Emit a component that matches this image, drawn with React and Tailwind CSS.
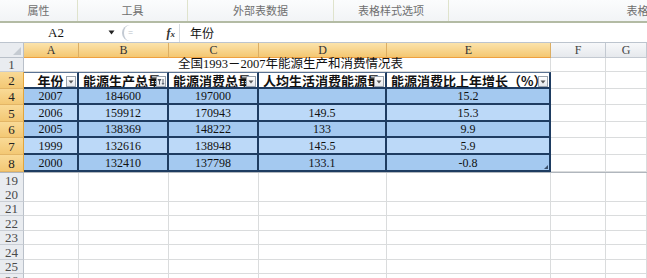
import React from 'react';

const serif = "font-['Liberation_Serif','Noto_Sans_CJK_SC',serif]";
const cjk = "font-['Noto_Sans_CJK_SC',sans-serif]";
const gridCols = 'grid grid-cols-[24px_55px_90px_90px_128px_164px_55px_41px]';

const groups = [
  { label: '属性', w: 'w-[78px]' },
  { label: '工具', w: 'w-[110px]' },
  { label: '外部表数据', w: 'w-[146px]' },
  { label: '表格样式选项', w: 'w-[115px]' },
  { label: '表格样式', w: 'w-[400px]' },
];

const data = [
  { n: 4, h: 'h-[16px]', band: 'bg-[#a4c9f0]', v: ['2007', '184600', '197000', '', '15.2'] },
  { n: 5, h: 'h-[17px]', band: 'bg-[#bcd9f8]', v: ['2006', '159912', '170943', '149.5', '15.3'] },
  { n: 6, h: 'h-[16px]', band: 'bg-[#a4c9f0]', v: ['2005', '138369', '148222', '133', '9.9'] },
  { n: 7, h: 'h-[17px]', band: 'bg-[#bcd9f8]', v: ['1999', '132616', '138948', '145.5', '5.9'] },
  { n: 8, h: 'h-[17px]', band: 'bg-[#a4c9f0]', v: ['2000', '132410', '137798', '133.1', '-0.8'] },
];

const headers = ['年份', '能源生产总量', '能源消费总量', '人均生活消费能源量', '能源消费比上年增长（%）'];

const FilterBtn = ({ active }) => (
  <span className="absolute right-[1px] top-[3px] w-[10px] h-[11px] border border-[#9aa3ad] bg-gradient-to-b from-[#ffffff] to-[#e4e7eb] flex items-center justify-center">
    {active ? (
      <svg width="8" height="8" viewBox="0 0 8 8">
        <path d="M0.5 1h4L3 3.5V7L2 6V3.5z" fill="#4a5563" />
        <path d="M6 1v5M5 5l1 1.5L7 5" stroke="#4a5563" strokeWidth="0.9" fill="none" />
      </svg>
    ) : (
      <svg width="6" height="4" viewBox="0 0 6 4">
        <path d="M0.5 0.5h5L3 3.5z" fill="#555" />
      </svg>
    )}
  </span>
);

const RowHead = ({ n, hl, h }) => (
  <div
    className={`${h} ${serif} text-[13px] leading-none flex items-center justify-center border-r border-b ${
      hl
        ? 'bg-gradient-to-b from-[#f9da96] to-[#f3c874] border-r-[#e2a53c] border-b-[#e3b565] text-[#222]'
        : 'bg-[#e9ecf0] border-r-[#b9c0c9] border-b-[#c9ced5] text-[#4a4a4a]'
    }`}
  >
    {n}
  </div>
);

const EmptyCells = ({ count }) =>
  Array.from({ length: count }).map((_, i) => (
    <div key={i} className="border-r border-b border-[#dadcdd] bg-white" />
  ));

export default function App() {
  const blank = [19, 20, 21, 22, 23, 24, 25, 26];
  const blankH = ['h-[15px]', 'h-[15px]', 'h-[14px]', 'h-[15px]', 'h-[14px]', 'h-[15px]', 'h-[14px]', 'h-[14px]'];

  return (
    <div className="w-[647px] h-[278px] overflow-hidden bg-white">
      {/* ribbon group labels */}
      <div className="h-[23px] flex bg-gradient-to-b from-[#fbfcfd] to-[#f2f4f6] border-b-2 border-[#b3bba4] overflow-hidden">
        {groups.map((g) => (
          <div
            key={g.label}
            className={`${g.w} shrink-0 h-full border-r border-[#dfe3cc] flex items-center justify-center ${cjk} text-[11px] text-[#6f6f6f]`}
          >
            {g.label}
          </div>
        ))}
      </div>

      {/* formula bar */}
      <div className="h-[20px] flex items-center bg-white border-b border-[#bcc4ce]">
        <div className={`w-[108px] shrink-0 text-center ${serif} text-[13px] text-[#111] pl-[4px]`}>A2</div>
        <svg width="7" height="5" viewBox="0 0 7 5" className="shrink-0">
          <path d="M0.5 0.5h6L3.5 4.5z" fill="#222" />
        </svg>
        <div className="ml-[7px] w-[57px] h-[16px] shrink-0 rounded-l-full border-l-2 border-[#c3cad3] flex items-center justify-between pl-[4px] pr-[4px]">
          <span className="text-[9px] text-[#b7bec7] leading-none">=</span>
          <span className="font-['Liberation_Serif',serif] italic text-[12px] font-bold text-[#333] leading-none">
            f<span className="text-[9px]">x</span>
          </span>
        </div>
        <div className="w-px h-[18px] bg-[#d6dbe1] shrink-0" />
        <div className={`pl-[10px] ${cjk} text-[12px] text-[#111]`}>年份</div>
      </div>

      {/* column headers */}
      <div className={`${gridCols} h-[15px]`}>
        <div className="relative bg-[#e9ecf0] border-r border-b border-[#b9c0c9]">
          <span className="absolute right-[2px] bottom-[2px] w-0 h-0 border-l-[8px] border-l-transparent border-b-[8px] border-b-[#c5cbd2]" />
        </div>
        {['A', 'B', 'C', 'D', 'E'].map((c) => (
          <div
            key={c}
            className={`bg-gradient-to-b from-[#fbe3ab] to-[#f4c770] border-r border-b border-r-[#dcae63] border-b-[#eea040] flex items-center justify-center ${serif} text-[12px] text-[#333] leading-none`}
          >
            {c}
          </div>
        ))}
        {['F', 'G'].map((c) => (
          <div
            key={c}
            className={`bg-gradient-to-b from-[#f7f8fa] to-[#e6e9ed] border-r border-b border-[#c3c9d1] flex items-center justify-center ${serif} text-[12px] text-[#444] leading-none`}
          >
            {c}
          </div>
        ))}
      </div>

      {/* row 1: title */}
      <div className={`${gridCols} h-[14px]`}>
        <RowHead n={1} h="h-[14px]" />
        <div className={`col-span-5 bg-white border-b border-r border-[#dadcdd] flex items-center pl-[154px] ${serif} text-[12.5px] text-[#111] leading-none whitespace-nowrap`}>
          全国1993－2007年能源生产和消费情况表
        </div>
        <EmptyCells count={2} />
      </div>

      {/* row 2: table header */}
      <div className={`${gridCols} h-[17px]`}>
        <RowHead n={2} hl h="h-[17px]" />
        {headers.map((t, i) => (
          <div
            key={t}
            className={`relative bg-white border-t border-t-[#5b7393] border-r-2 border-b-2 border-[#1e3c61] overflow-hidden flex items-center ${
              i === 0 ? 'justify-center' : 'pl-[4px]'
            } ${cjk} font-bold text-[13px] text-[#111] leading-none whitespace-nowrap`}
          >
            <span className={i === 0 ? '' : 'overflow-hidden'}>{t}</span>
            <FilterBtn active={i === 1} />
          </div>
        ))}
        <EmptyCells count={2} />
      </div>

      {/* data rows */}
      {data.map((r, ri) => (
        <div key={r.n} className={`${gridCols} ${r.h}`}>
          <RowHead n={r.n} hl h={r.h} />
          {r.v.map((v, i) => (
            <div
              key={i}
              className={`relative ${r.band} border-r-2 border-b-2 border-[#1e3c61] flex items-center justify-center ${serif} text-[12px] text-[#111] leading-none`}
            >
              {v}
              {ri === data.length - 1 && i === 4 && (
                <span className="absolute right-[1px] bottom-[1px] w-0 h-0 border-l-[4px] border-l-transparent border-b-[4px] border-b-[#3a506b]" />
              )}
            </div>
          ))}
          <EmptyCells count={2} />
        </div>
      ))}

      {/* empty rows */}
      {blank.map((n, i) => (
        <div key={n} className={`${gridCols} ${blankH[i]} ${i === 0 ? 'border-t border-[#b0b6bd]' : ''}`}>
          <RowHead n={n} h={blankH[i]} />
          <EmptyCells count={7} />
        </div>
      ))}
    </div>
  );
}
